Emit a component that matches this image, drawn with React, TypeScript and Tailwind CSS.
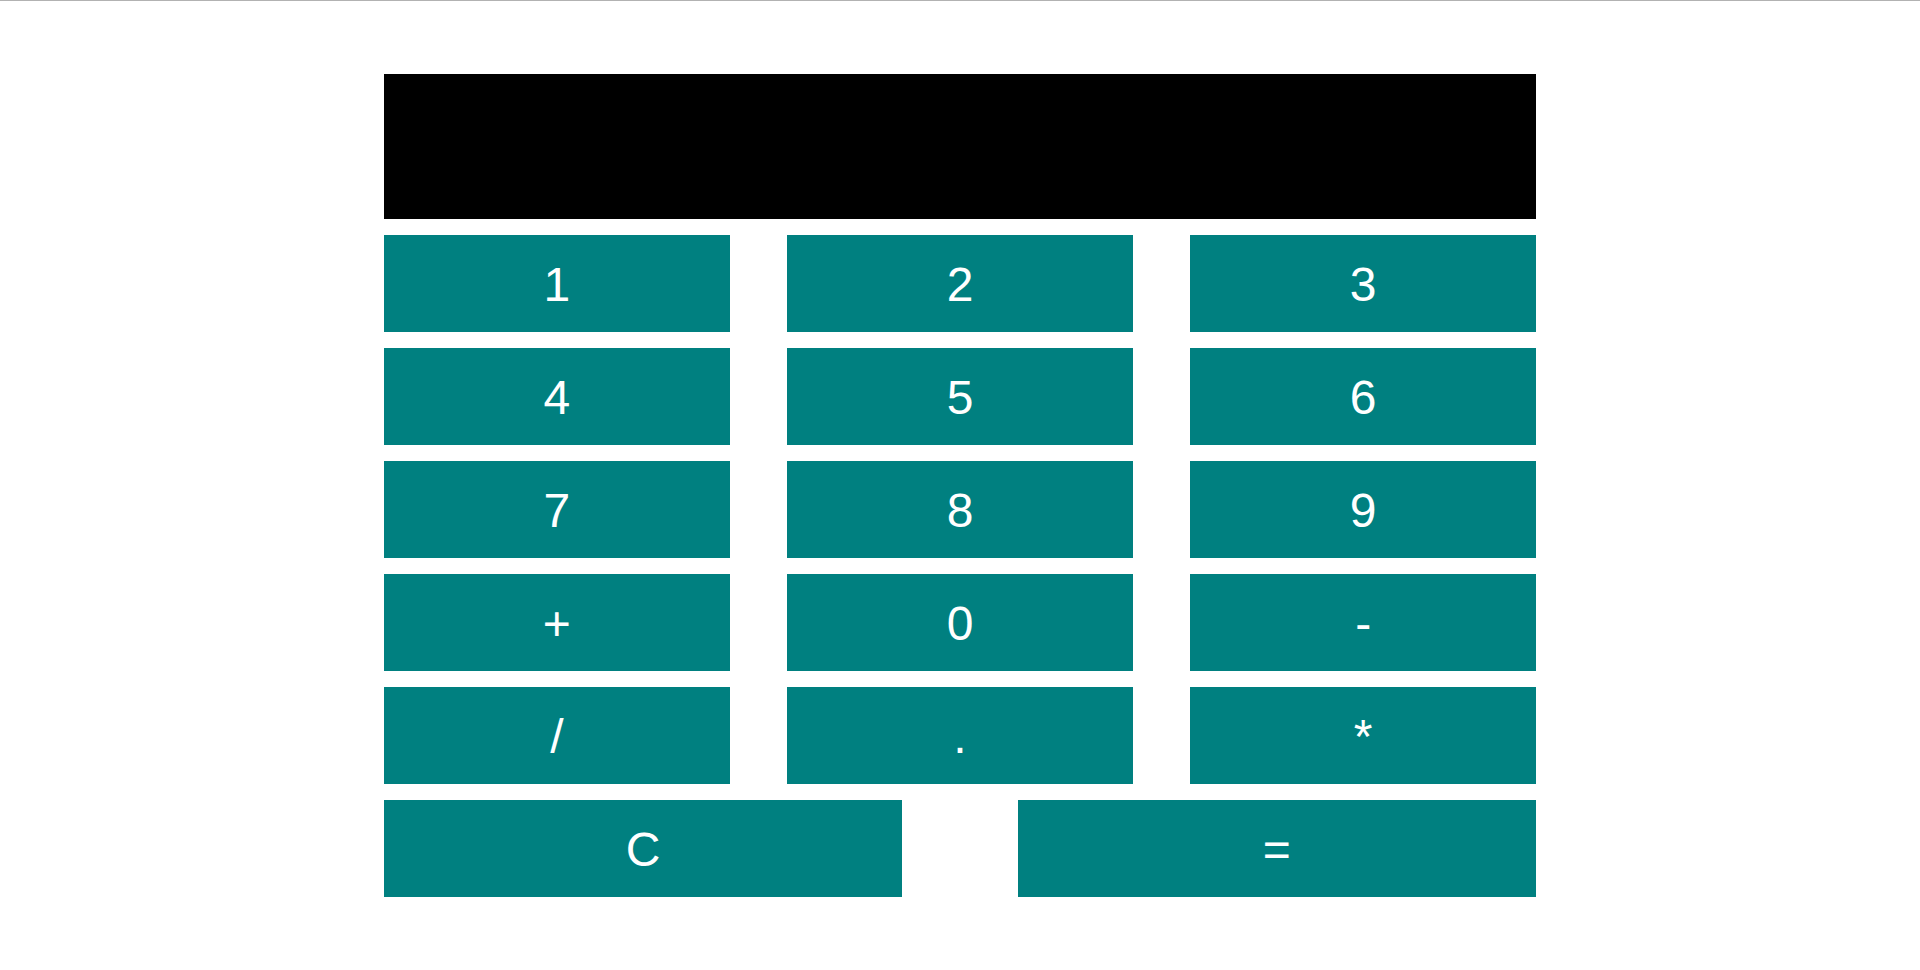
import React, { useState } from "react";

const keys = ["1", "2", "3", "4", "5", "6", "7", "8", "9", "+", "0", "-", "/", ".", "*"];

function Key({ label, wide, onPress }: { label: string; wide?: boolean; onPress: () => void }) {
  return (
    <button
      type="button"
      onClick={onPress}
      className={`${wide ? "w-[45%]" : "w-[30%]"} h-[97px] bg-[#008080] pt-[2px] text-center text-[48px] leading-[55px] text-white`}
    >
      {label}
    </button>
  );
}

function evaluate(expression: string): string {
  if (!/^[\d+\-*/.]+$/.test(expression)) return "";
  try {
    return String(new Function(`return (${expression})`)());
  } catch {
    return "Error";
  }
}

export default function App() {
  const [value, setValue] = useState("");

  return (
    <main className="border-t border-[#b2b2b2] bg-white font-['Liberation_Sans',Arial,sans-serif]">
      <div className="mx-auto mt-[73px] flex w-[60%] flex-wrap justify-between gap-y-4 pb-16">
        <input
          type="text"
          readOnly
          aria-label="Result"
          value={value}
          className="h-[145px] w-full bg-black px-4 text-right text-[48px] text-white outline-none"
        />
        {keys.map((key) => (
          <Key key={key} label={key} onPress={() => setValue(value + key)} />
        ))}
        <Key label="C" wide onPress={() => setValue("")} />
        <Key label="=" wide onPress={() => setValue(evaluate(value))} />
      </div>
    </main>
  );
}
